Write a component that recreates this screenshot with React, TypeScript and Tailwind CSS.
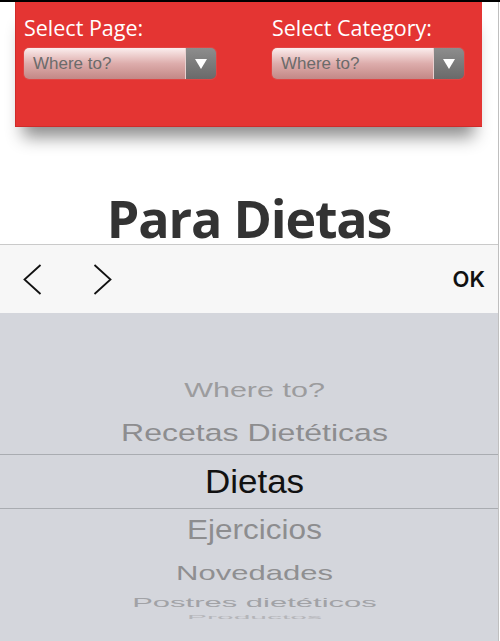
import React from "react";

function SelectBox() {
  return (
    <div className="flex h-[33px] w-[194px] overflow-hidden rounded-[6px] border border-[#d9605e]/40">
      <div className="flex flex-1 items-center bg-gradient-to-b from-[#fbeeee] via-[#ddadac] to-[#c38886] pl-[9px]">
        <span className="text-[17px] leading-none text-[#6b6b6b] [font-family:'Liberation_Sans',Arial,sans-serif]">
          Where to?
        </span>
      </div>
      <div className="flex w-[31px] items-center justify-center border-l border-[#e9d0d0] bg-gradient-to-b from-[#8d8d8d] to-[#6a6a6a]">
        <svg width="14" height="12" viewBox="0 0 14 12">
          <path d="M1 1 H13 L7 11 Z" fill="#ffffff" />
        </svg>
      </div>
    </div>
  );
}

function Field({ label }: { label: string }) {
  return (
    <div className="flex w-[194px] flex-col gap-[7px]">
      <div className="h-[24px] whitespace-nowrap pl-[1px] text-[21.5px] leading-[24px] text-white [font-family:'Open_Sans',sans-serif]">
        {label}
      </div>
      <SelectBox />
    </div>
  );
}

export default function App() {
  return (
    <div className="relative h-[641px] w-[500px] overflow-hidden bg-white">
      <div className="h-[2px] w-full bg-black" />
      <div className="flex h-[639px] w-[499px] flex-col border-r border-[#bfbfbf]">
        <div className="ml-[15px] flex h-[125px] w-[467px] shrink-0 gap-[54px] border-b border-l border-[#cf2b2a] bg-[#e43533] pl-[7px] pt-[14px] shadow-[0_18px_16px_-8px_rgba(0,0,0,0.45)]">
          <Field label="Select Page:" />
          <Field label="Select Category:" />
        </div>

        <h1 className="mt-[64px] h-[53px] shrink-0 text-center text-[52px] font-bold leading-[53px] tracking-[-1.2px] text-[#333333] [font-family:'Open_Sans',sans-serif]">
          Para Dietas
        </h1>

        <div className="flex h-[69px] shrink-0 items-center border-t border-[#cacaca] bg-[#f7f7f7] pl-[23px] pr-[13px]">
          <svg width="19" height="31" viewBox="0 0 19 31" className="shrink-0">
            <path d="M17.5 1 L1.5 15.5 L17.5 30" fill="none" stroke="#111" strokeWidth="1.8" />
          </svg>
          <svg width="19" height="31" viewBox="0 0 19 31" className="ml-[51px] shrink-0">
            <path d="M1.5 1 L17.5 15.5 L1.5 30" fill="none" stroke="#111" strokeWidth="1.8" />
          </svg>
          <div className="ml-auto text-[22px] font-semibold leading-none text-[#111] [font-family:Inter,sans-serif]">
            OK
          </div>
        </div>

        <div className="flex flex-1 flex-col bg-[#d4d6dc] [font-family:'Liberation_Sans',Arial,sans-serif]">
          <div className="h-[55px] shrink-0" />
          <Row h="h-[44px]" text="Where to?" cls="text-[30.5px] scale-y-[0.64] text-[#9c9c9e]" />
          <Row h="h-[42px]" text="Recetas Dietéticas" cls="text-[32px] scale-y-[0.74] text-[#8d8d8f]" />
          <div className="flex h-[55px] shrink-0 items-center justify-center border-y border-[#a9acb1] pl-[11px]">
            <span className="inline-block scale-y-[0.94] text-[35px] leading-none text-[#111]">Dietas</span>
          </div>
          <Row h="h-[41px]" text="Ejercicios" cls="text-[31.5px] scale-y-[0.87] text-[#8d8d8f]" />
          <Row h="h-[45px]" text="Novedades" cls="text-[31px] scale-y-[0.68] text-[#8f8f91]" />
          <Row h="h-[14px]" text="Postres dietéticos" cls="text-[31px] scale-y-[0.43] text-[#a1a2a6]" />
          <Row h="h-[16px]" text="Productos" cls="text-[30px] scale-y-[0.2] text-[#b4b5b9]" />
        </div>
      </div>
    </div>
  );
}

function Row({ h, text, cls }: { h: string; text: string; cls: string }) {
  return (
    <div className={`flex shrink-0 items-center justify-center pl-[11px] ${h}`}>
      <span className={`inline-block whitespace-nowrap leading-none ${cls}`}>{text}</span>
    </div>
  );
}
